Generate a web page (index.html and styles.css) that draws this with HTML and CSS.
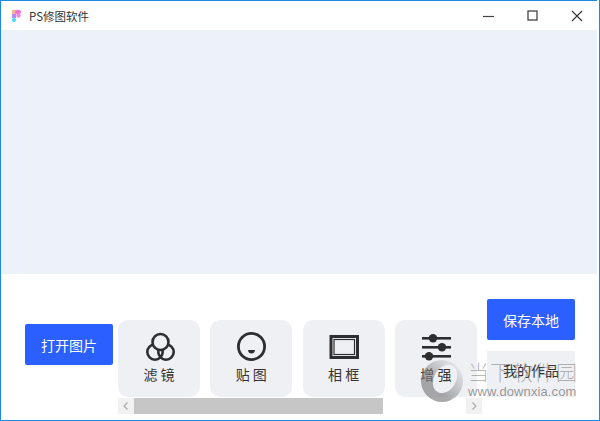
FILE: index.html
```html
<!DOCTYPE html>
<html lang="zh">
<head>
<meta charset="utf-8">
<title>PS修图软件</title>
<link rel="stylesheet" href="styles.css">
</head>
<body>
<div class="window">
  <header class="titlebar">
    <div class="title">
      <svg class="logo" width="12" height="14" viewBox="0 0 12 14">
        <rect x="1" y="1" width="4" height="4" fill="#f6b49a"/>
        <rect x="4" y="1" width="6" height="4" rx="2" fill="#f070d0"/>
        <rect x="1" y="5" width="4" height="4" fill="#b48cf5"/>
        <circle cx="7.500" cy="6.500" r="2.200" fill="#f08ade"/>
        <rect x="1" y="9" width="4" height="4" rx="2" fill="#40d8f5"/>
      </svg>
      <span>PS修图软件</span>
    </div>
    <div class="controls">
      <svg width="12" height="12" viewBox="0 0 12 12"><path d="M0 6.500h11" stroke="#444" stroke-width="1.200" fill="none"/></svg>
      <svg width="12" height="12" viewBox="0 0 12 12"><rect x="1" y="1" width="9" height="9" stroke="#333" stroke-width="1.200" fill="none"/></svg>
      <svg width="12" height="12" viewBox="0 0 12 12"><path d="M1 1l10 10M11 1L1 11" stroke="#333" stroke-width="1.100" fill="none"/></svg>
    </div>
  </header>
  <main class="canvas"></main>
  <section class="toolbar">
    <button class="btn btn-open">打开图片</button>
    <div class="tools">
      <div class="cards">
        <div class="card">
          <svg width="32" height="30" viewBox="0 0 32 30"><g stroke="#2e2e30" stroke-width="2.600" fill="none"><circle cx="12" cy="20" r="7.700"/><circle cx="23" cy="20" r="7.700"/><circle cx="17.500" cy="10" r="8" fill="#eff0f4"/></g></svg>
          <span class="label">滤 镜</span>
        </div>
        <div class="card">
          <svg width="32" height="30" viewBox="0 0 32 30"><circle cx="16.500" cy="14.500" r="13.100" fill="none" stroke="#2e2e30" stroke-width="2.800"/><path d="M13 18h7q-.5 3.500-3.500 3.500t-3.500-3.500z" fill="#2e2e30"/></svg>
          <span class="label">贴 图</span>
        </div>
        <div class="card">
          <svg width="32" height="30" viewBox="0 0 32 30"><rect x="1.500" y="3" width="29.500" height="24" fill="#2e2e30"/><rect x="4.500" y="6" width="23.500" height="18" fill="#eff0f4"/><rect x="6" y="7.500" width="20.500" height="15" fill="none" stroke="#2e2e30" stroke-width="1.200"/></svg>
          <span class="label">相 框</span>
        </div>
        <div class="card">
          <svg width="32" height="30" viewBox="0 0 32 30"><g fill="#2e2e30"><rect x="2" y="5" width="29" height="2.600"/><rect x="2" y="14" width="29" height="2.600"/><rect x="2" y="23" width="29" height="2.600"/><circle cx="13" cy="6.300" r="4.200"/><circle cx="22" cy="15.300" r="4.200"/><circle cx="9" cy="24.300" r="4.200"/></g></svg>
          <span class="label">增 强</span>
        </div>
      </div>
      <div class="scrollbar">
        <span class="arrow"><svg width="16" height="16" viewBox="0 0 16 16"><path d="M9.500 4.500L6 8l3.500 3.500" fill="none" stroke="#aaa" stroke-width="1.200"/></svg></span>
        <span class="thumb"></span>
        <span class="arrow arrow-end"><svg width="16" height="16" viewBox="0 0 16 16"><path d="M6.500 4.500L10 8l-3.500 3.500" fill="none" stroke="#aaa" stroke-width="1.200"/></svg></span>
      </div>
    </div>
    <div class="actions">
      <button class="btn">保存本地</button>
      <button class="btn-works">我的作品</button>
    </div>
  </section>
  <div class="watermark">
    <svg class="wm-logo" width="44" height="44" viewBox="0 0 44 44">
      <defs>
        <linearGradient id="wm-fade" x1="0" y1="1" x2="1" y2="0">
          <stop offset=".35" stop-color="#7c7c7c" stop-opacity=".65"/>
          <stop offset=".9" stop-color="#7c7c7c" stop-opacity=".05"/>
        </linearGradient>
      </defs>
      <path fill="url(#wm-fade)" fill-rule="evenodd" d="M22 1a21 21 0 1 0 0 42a21 21 0 1 0 0-42zM17.500 33A11 15 30 1 0 32.500 7A11 15 30 1 0 17.500 33z"/>
    </svg>
    <div class="wm-text">
      <span class="wm-cn">当下软件园</span>
      <span class="wm-url">www.downxia.com</span>
    </div>
  </div>
</div>
</body>
</html>
```
FILE: styles.css
```css
* { box-sizing: border-box; }
html, body { margin: 0; padding: 0; background: #fff; }
body { width: 600px; height: 421px; overflow: hidden; font-family: "Noto Sans CJK SC", "Noto Sans", sans-serif; }
.window {
  position: relative;
  width: 600px;
  height: 421px;
  border: 1px solid #1e88e5;
  border-top: 0;
  padding-right: 2px;
  display: flex;
  flex-direction: column;
  background: #fff;
}
.titlebar { height: 30px; flex: none; border-top: 1px solid #1e88e5; display: flex; align-items: center; justify-content: space-between; }
.title { display: flex; align-items: center; gap: 6px; padding-left: 10px; font-size: 11.500px; color: #333; }
.logo { display: block; }
.controls { display: flex; align-items: center; gap: 32px; padding-right: 14px; }
.controls svg { display: block; }
.canvas { height: 244px; flex: none; background: #edf1f9; }
.toolbar { flex: 1; display: flex; align-items: flex-start; padding-left: 24px; }
.btn {
  width: 88px;
  height: 41px;
  flex: none;
  border: 0;
  border-radius: 2px;
  background: #2b5fff;
  color: #fff;
  font: 14px "Noto Sans CJK SC", sans-serif;
  padding: 0;
}
.btn-open { margin-top: 50px; margin-right: 5px; }
.tools { margin-top: 46px; width: 364px; flex: none; display: flex; flex-direction: column; gap: 1px; }
.cards { display: flex; gap: 10.300px; }
.card {
  width: 82px;
  height: 77px;
  flex: none;
  border-radius: 10px;
  background: #eff0f4;
  display: flex;
  flex-direction: column;
  align-items: center;
  padding-top: 12px;
  gap: 3px;
}
.card svg { display: block; }
.label { font-size: 14px; line-height: 18px; color: #333; }
.scrollbar { height: 16px; display: flex; align-items: stretch; background: #fff; }
.arrow { width: 16px; background: #f1f1f1; }
.arrow svg { display: block; }
.arrow-end { margin-left: auto; }
.thumb { width: 249px; background: #c6c6c6; }
.actions { margin-top: 25px; margin-left: 5px; flex: none; display: flex; flex-direction: column; gap: 11px; }
.btn-works {
  width: 88px;
  height: 46px;
  border: 0;
  background: #eff0f4;
  color: #333;
  font: 14px "Noto Sans CJK SC", sans-serif;
  padding: 0 0 8px;
}
.watermark { position: absolute; left: 419px; top: 359px; display: flex; gap: 4px; white-space: nowrap; pointer-events: none; }
.wm-logo { display: block; }
.wm-text { display: flex; flex-direction: column; }
.wm-cn { font-size: 21px; line-height: 24px; letter-spacing: 1px; color: rgba(120,120,120,.55); font-weight: 300; }
.wm-url { font: 13px/16px "Liberation Sans", sans-serif; margin-top: 1px; letter-spacing: .1px; color: rgba(120,120,120,.75); }
```
